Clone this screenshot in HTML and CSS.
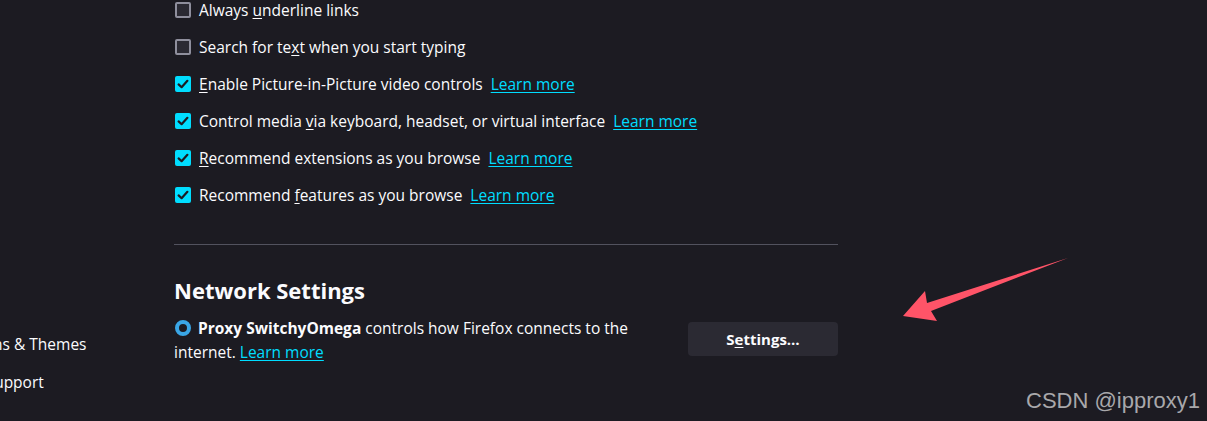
FILE: index.html
```html
<!DOCTYPE html>
<html lang="en">
<head>
<meta charset="utf-8">
<title>Settings</title>
<link rel="stylesheet" href="styles.css">
</head>
<body>
<div class="page">
  <nav class="sidebar">
    <div class="nav-item"><span class="nav-label">Extensions &amp; Themes</span></div>
    <div class="nav-item"><span class="nav-label">Firefox Support</span></div>
  </nav>
  <main class="content">
    <div class="checks">
      <label class="row"><span class="box"></span><span>Always <u>u</u>nderline links</span></label>
      <label class="row"><span class="box"></span><span>Search for te<u>x</u>t when you start typing</span></label>
      <label class="row"><span class="box on"><svg viewBox="0 0 16 16"><path d="M3.6 8.4 L6.6 11.2 L12.4 4.8" /></svg></span><span><u>E</u>nable Picture-in-Picture video controls</span><a class="link" href="#">Learn more</a></label>
      <label class="row"><span class="box on"><svg viewBox="0 0 16 16"><path d="M3.6 8.4 L6.6 11.2 L12.4 4.8" /></svg></span><span>Control media <u>v</u>ia keyboard, headset, or virtual interface</span><a class="link" href="#">Learn more</a></label>
      <label class="row"><span class="box on"><svg viewBox="0 0 16 16"><path d="M3.6 8.4 L6.6 11.2 L12.4 4.8" /></svg></span><span><u>R</u>ecommend extensions as you browse</span><a class="link" href="#">Learn more</a></label>
      <label class="row"><span class="box on"><svg viewBox="0 0 16 16"><path d="M3.6 8.4 L6.6 11.2 L12.4 4.8" /></svg></span><span>Recommend <u>f</u>eatures as you browse</span><a class="link" href="#">Learn more</a></label>
    </div>
    <hr class="sep">
    <h2 class="heading">Network Settings</h2>
    <div class="proxy">
      <p class="proxy-text"><span class="ext-icon"></span><b>Proxy SwitchyOmega</b> controls how Firefox connects to the internet. <a class="link" href="#">Learn more</a></p>
      <button class="btn">S<u>e</u>ttings…</button>
    </div>
  </main>
</div>
<svg class="arrow" viewBox="0 0 200 80" width="200" height="80">
  <path d="M188 8 L47 53 L45 41 L23 66 L57 71 L51 61 Z" fill="#ff5468"/>
</svg>
<div class="watermark">CSDN @ipproxy1</div>
</body>
</html>
```
FILE: styles.css
```css
html, body {
  margin: 0;
  padding: 0;
  background: #1c1b22;
  color: #fbfbfe;
  font-family: "Open Sans", "Noto Sans", sans-serif;
  font-size: 15.5px;
  overflow: hidden;
  height: 421px;
}
.page {
  display: grid;
  grid-template-columns: 174px 664px;
  height: 421px;
}
.sidebar {
  display: flex;
  flex-direction: column;
  padding-top: 332px;
  gap: 14px;
  overflow: hidden;
}
.nav-item {
  display: flex;
  height: 24px;
  align-items: center;
  white-space: nowrap;
  margin-left: -68px;
}
.nav-label { flex: none; }
.content {
  display: flex;
  flex-direction: column;
}
.checks {
  display: flex;
  flex-direction: column;
  gap: 13px;
  margin-top: -2px;
}
.row {
  display: flex;
  align-items: center;
  height: 24px;
  white-space: nowrap;
}
.box {
  box-sizing: border-box;
  width: 16px;
  height: 16px;
  border: 2px solid #8f8f9d;
  background: #2b2a33;
  border-radius: 2px;
  margin: 0 8px 0 1px;
  flex: none;
  display: flex;
}
.box.on {
  border: none;
  background: #00ddff;
}
.box svg {
  width: 16px;
  height: 16px;
}
.box svg path {
  fill: none;
  stroke: #1c1b22;
  stroke-width: 2.2;
  stroke-linecap: round;
  stroke-linejoin: round;
}
u { text-decoration-thickness: 1px; text-underline-offset: 2px; }
.link {
  color: #00ddff;
  text-decoration: underline;
  text-decoration-thickness: 1px;
  text-underline-offset: 2px;
  margin-left: 8px;
}
.proxy-text .link { margin-left: 0; }
.sep {
  margin: 37px 0 0;
  border: none;
  border-top: 1px solid #52525e;
  height: 0;
}
.heading {
  margin: 30px 0 0;
  font-size: 22px;
  font-weight: 700;
  line-height: 30px;
}
.proxy {
  display: flex;
  align-items: flex-start;
  gap: 16px;
  margin-top: 11px;
}
.proxy-text {
  margin: 0;
  flex: 1;
  line-height: 24px;
}
.ext-icon {
  display: inline-block;
  box-sizing: border-box;
  width: 16px;
  height: 16px;
  border: 4px solid #3aa6e6;
  border-radius: 50%;
  vertical-align: -2px;
  margin: 0 7px 0 1px;
}
.btn {
  flex: none;
  width: 150px;
  height: 34px;
  margin-top: 6px;
  background: #2b2a33;
  color: #fbfbfe;
  border: none;
  border-radius: 4px;
  font-family: inherit;
  font-size: 15px;
  font-weight: 700;
}
.arrow {
  position: absolute;
  left: 880px;
  top: 250px;
}
.watermark {
  position: absolute;
  right: 7px;
  top: 388px;
  font-family: "Liberation Sans", Arial, sans-serif;
  font-size: 22px;
  color: #a8a8ab;
}
```
